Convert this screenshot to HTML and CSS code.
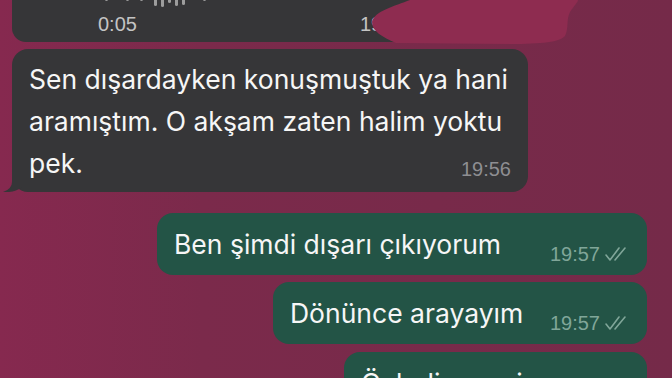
FILE: index.html
```html
<html lang="tr">

<head>
    <title>Sohbet</title>
    <link rel="stylesheet" href="styles.css">
</head>

<body>
    <div class="chat">
        <!-- voice note, mostly scrolled off the top -->
        <div class="bubble voice">
            <div class="wave">
                <span style="height: 6px"></span>
                <span style="height: 9px"></span>
                <span style="height: 5px"></span>
                <span style="height: 8px"></span>
                <span style="height: 10px"></span>
                <span style="height: 6px"></span>
                <span style="height: 9px"></span>
                <span style="height: 7px"></span>
                <span style="height: 19px"></span>
                <span style="height: 21px"></span>
                <span style="height: 14px"></span>
                <span style="height: 20px"></span>
                <span style="height: 18px"></span>
                <span style="height: 8px"></span>
                <span style="height: 6px"></span>
                <span style="height: 9px"></span>
                <span style="height: 5px"></span>
                <span style="height: 7px"></span>
                <span style="height: 4px"></span>
            </div>
            <div class="voice-meta">
                <span class="dur">0:05</span>
                <span>19:55</span>
            </div>
        </div>

        <div class="bubble incoming">
            <p class="text">Sen dışardayken konuşmuştuk ya hani aramıştım. O akşam zaten halim yoktu pek.<span class="time">19:56</span></p>
            <svg class="tail" viewBox="0 0 20 20" width="20" height="20">
                <path d="M10 0 L10 10 Q10 17 1 20 Q12 21 20 15 L20 0 Z" fill="#363638"/>
            </svg>
        </div>

        <div class="bubble outgoing out-1">
            <p class="text">Ben şimdi dışarı çıkıyorum</p>
            <span class="meta">19:57
                <svg class="ticks" viewBox="0 0 26 16" width="26" height="16">
                    <path d="M2 9 L6 14 L15 2" />
                    <path d="M11 14 L21 2" />
                </svg>
            </span>
        </div>
        <div class="bubble outgoing out-2">
            <p class="text">Dönünce arayayım</p>
            <span class="meta">19:57
                <svg class="ticks" viewBox="0 0 26 16" width="26" height="16">
                    <path d="M2 9 L6 14 L15 2" />
                    <path d="M11 14 L21 2" />
                </svg>
            </span>
        </div>
        <div class="bubble outgoing out-3">
            <p class="text">Özledim seni</p>
            <span class="meta">19:58
                <svg class="ticks" viewBox="0 0 26 16" width="26" height="16">
                    <path d="M2 9 L6 14 L15 2" />
                    <path d="M11 14 L21 2" />
                </svg>
            </span>
        </div>
    </div>

    <!-- marker scribble hiding the name -->
    <svg class="scribble" viewBox="0 0 225 46" width="225" height="46">
        <path d="M50 0 C35 6 14 11 12 22 C12 31 22 37 36 43 L150 44 C182 44 200 42 205 36 C209 28 206 20 210 12 C214 6 218 2 218 0 Z" fill="#8e2c50"/>
    </svg>
</body>
</html>
```

FILE: styles.css
```css
* {
    box-sizing: border-box;
}

body {
    margin: 0;
    width: 672px;
    height: 378px;
    overflow: hidden;
    position: relative;
    background: linear-gradient(90deg, #86294f 0%, #7b2a4b 30%, #752a49 100%);
    font-family: "Liberation Sans", Arial, sans-serif;
}

.chat {
    display: flex;
    flex-direction: column;
    align-items: flex-start;
    padding: 0 25px 0 12px;
}

.bubble {
    position: relative;
    border-radius: 16px;
    color: #f6f6f6;
}

.text {
    margin: 0;
    font-family: Inter, "Liberation Sans", sans-serif;
    font-size: 26.5px;
    line-height: 42px;
}

/* voice note */
.voice {
    width: 470px;
    margin-top: -20px;
    padding: 8px 0 6px 86px;
    background: #363638;
    border-radius: 14px;
}

.wave {
    display: flex;
    align-items: center;
    gap: 4px;
    height: 16px;
}

.wave span {
    width: 3px;
    background: #9d9d9d;
    border-radius: 2px;
}

.voice-meta {
    display: flex;
    margin-top: 8px;
    font-size: 20px;
    line-height: 24px;
    color: #c4c4c4;
}

.voice-meta .dur {
    width: 262px;
}

/* received message */
.incoming {
    width: 516px;
    margin-top: 7px;
    padding: 9px 17px 8px;
    background: #363638;
}

.time {
    float: right;
    margin-top: 15px;
    font-family: "Liberation Sans", Arial, sans-serif;
    font-size: 20px;
    line-height: 24px;
    color: #8e8e92;
}

.tail {
    position: absolute;
    left: -10px;
    bottom: 0;
}

/* sent messages */
.outgoing {
    align-self: flex-end;
    display: flex;
    align-items: flex-end;
    height: 62px;
    padding: 10px 17px 10px;
    background: #235446;
}

.out-1 {
    width: 490px;
    margin-top: 21px;
}

.out-2 {
    width: 374px;
    margin-top: 7px;
}

.out-3 {
    width: 303px;
    margin-top: 8px;
}

.meta {
    display: flex;
    align-items: center;
    gap: 4px;
    margin-left: auto;
    margin-bottom: -1px;
    font-size: 20px;
    line-height: 24px;
    color: #80a699;
}

.ticks {
    fill: none;
    stroke: #80a699;
    stroke-width: 1.6;
    stroke-linecap: round;
    stroke-linejoin: round;
}

.scribble {
    position: absolute;
    left: 360px;
    top: 0;
}
```
